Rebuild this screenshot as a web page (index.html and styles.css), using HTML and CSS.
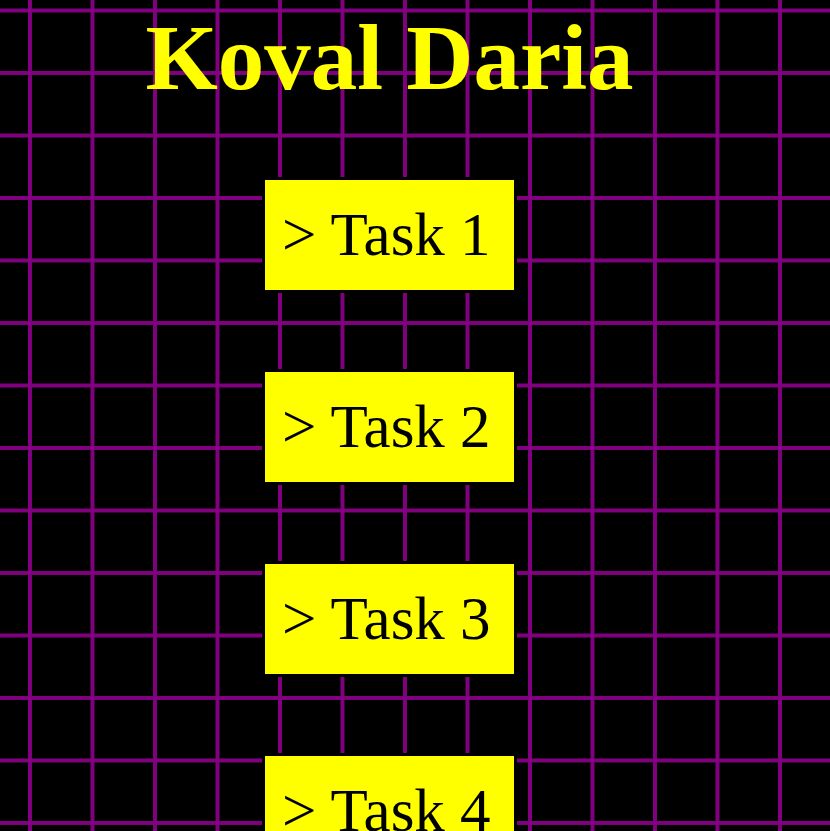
FILE: index.html
```html
<!DOCTYPE html>
<html lang="en">
<head>
<meta charset="utf-8">
<title>Koval Daria</title>
<link rel="stylesheet" href="styles.css">
</head>
<body>
<main class="page">
  <h1 class="title">Koval Daria</h1>
  <nav class="tasks">
    <a class="task" href="#">&gt; Task 1</a>
    <a class="task" href="#">&gt; Task 2</a>
    <a class="task" href="#">&gt; Task 3</a>
    <a class="task" href="#">&gt; Task 4</a>
  </nav>
</main>
</body>
</html>
```

FILE: styles.css
```css
html, body {
  margin: 0;
  padding: 0;
}

body {
  background-color: #000;
  background-image:
    linear-gradient(to right, #800080 0, #800080 4px, transparent 4px),
    linear-gradient(to bottom, #800080 0, #800080 4px, transparent 4px);
  background-size: 62.5px 62.5px;
  background-position: 28px 8.5px;
  font-family: "Liberation Serif", "Times New Roman", serif;
}

.page {
  width: 779px;
  display: flex;
  flex-direction: column;
  align-items: center;
}

.title {
  margin: 4px 0 0;
  font-size: 93px;
  font-weight: bold;
  line-height: normal;
  color: #ffff00;
}

.tasks {
  margin-top: 66px;
  display: flex;
  flex-direction: column;
  align-items: center;
  gap: 76px;
}

.task {
  display: block;
  box-sizing: border-box;
  width: 255px;
  height: 116px;
  border: 3px solid #000;
  background: #ffff00;
  color: #000;
  text-decoration: none;
  font-size: 61px;
  line-height: 70px;
  padding: 20px 0 0 17px;
  white-space: nowrap;
}
```
